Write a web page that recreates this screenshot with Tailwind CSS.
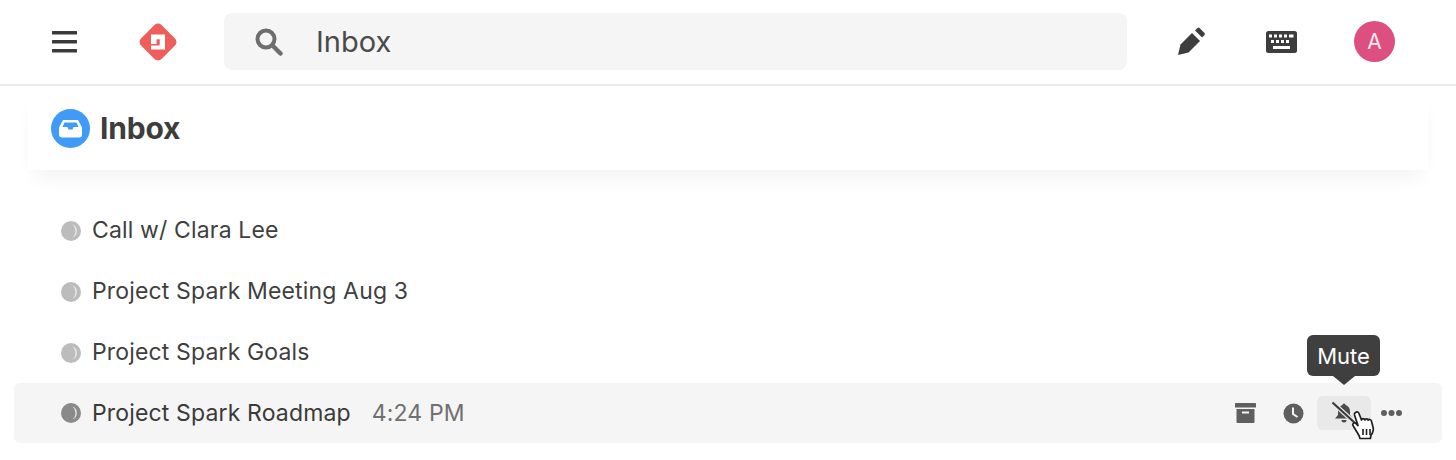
<!DOCTYPE html>
<html>
<head>
<meta charset="utf-8">
<script src="https://cdn.jsdelivr.net/npm/@tailwindcss/browser@4"></script>
</head>
<body class="bg-white overflow-hidden font-['Inter',sans-serif] text-[#3f3f3f]">
<div class="w-[1456px] h-[460px] overflow-hidden flex flex-col">
  <header class="h-[86px] shrink-0 border-b-2 border-[#ebebeb] flex items-center pl-[52px] pb-[1px]">
    <svg class="w-[25px] h-[22px] shrink-0" viewBox="0 0 25 22"><rect x="0" y="0" width="25" height="3.6" rx=".5" fill="#3a3a3a"/><rect x="0" y="9" width="25" height="3.6" rx=".5" fill="#3a3a3a"/><rect x="0" y="18" width="25" height="3.6" rx=".5" fill="#3a3a3a"/></svg>
    <svg class="w-[42px] h-[42px] ml-[60px] shrink-0" viewBox="0 0 42 42">
      <rect x="6.5" y="6.5" width="29" height="29" rx="5" transform="rotate(45 21 21)" fill="#ee5e5a"/>
      <path d="M14 13.5h14v5h-8.500v4.500h-5.500zM28 18.500v10h-14v-4h8.500v-6z" fill="#fff"/>
      <path d="M20 18.500h2.500v5h-2.500z" fill="#ee5e5a"/>
    </svg>
    <div class="w-[903px] h-[57px] ml-[45px] rounded-[8px] bg-[#f5f5f5] flex items-center pl-[30px] shrink-0">
      <svg class="w-[29px] h-[29px] shrink-0" viewBox="0 0 29 29"><circle cx="12" cy="12" r="8.500" fill="none" stroke="#6e6e6e" stroke-width="4"/><path d="M18.500 18.500l8 8" stroke="#6e6e6e" stroke-width="4.500" stroke-linecap="round"/></svg>
      <span class="ml-[33px] text-[29px] leading-none text-[#4a4a4a]">Inbox</span>
    </div>
    <svg class="w-[30px] h-[30px] ml-[49px] shrink-0" viewBox="0 0 30 30">
      <path d="M2 28l2.500-10.500L16 6l8 8-11.500 11.500z" fill="#3d3d3d"/>
      <path d="M19 3.500l2.500-2.500a1.500 1.500 0 0 1 2 0l5 5a1.500 1.500 0 0 1 0 2L26 10.500z" fill="#3d3d3d"/>
      <path d="M15 4l1.500-1.500 9 9" stroke="#fff" stroke-width="1.200" fill="none"/>
    </svg>
    <svg class="w-[31px] h-[22px] ml-[60px] shrink-0" viewBox="0 0 31 22">
      <rect width="31" height="22" rx="2.500" fill="#3d3d3d"/>
      <g fill="#fff"><rect x="3" y="3.500" width="3" height="3"/><rect x="8" y="3.500" width="3" height="3"/><rect x="13" y="3.500" width="3" height="3"/><rect x="18" y="3.500" width="3" height="3"/><rect x="23" y="3.500" width="4.500" height="3"/><rect x="5" y="9" width="3" height="3"/><rect x="10" y="9" width="3" height="3"/><rect x="15" y="9" width="3" height="3"/><rect x="20" y="9" width="3" height="3"/><rect x="7" y="15" width="17" height="3"/></g>
    </svg>
    <div class="w-[41px] h-[41px] ml-[57px] rounded-full bg-[#dd4f7f] text-[#fde8ef] flex items-center justify-center text-[21px] shrink-0">A</div>
  </header>

  <div class="h-[84px] shrink-0 mx-[28px] pl-[23px] flex items-center gap-[10px] bg-white shadow-[0_14px_20px_-8px_rgba(0,0,0,0.06)]">
    <div class="w-[39px] h-[39px] rounded-full bg-[#3f9bf6] flex items-center justify-center shrink-0">
      <svg class="w-[25px] h-[19px]" viewBox="0 0 25 19"><path d="M5 1h15l4 7.500v7a3 3 0 0 1-3 3H4a3 3 0 0 1-3-3v-7z" fill="#fff"/><path d="M6.500 3.500h12l2 4.500h-5l-1 2.500h-4l-1-2.500h-5z" fill="#3f9bf6"/></svg>
    </div>
    <h1 class="text-[30px] leading-none font-bold text-[#3d3d3d] tracking-[-0.2px]">Inbox</h1>
  </div>

  <ul class="mt-[30px] mx-[14px] text-[23px] leading-none">
    <li class="h-[61px] pl-[47px] flex items-center gap-[11px]">
      <svg class="w-[20px] h-[20px] shrink-0" viewBox="0 0 20 20"><circle cx="10" cy="10" r="10" fill="#bcbcbc"/><path d="M11.500 3.500a7 7 0 0 1 0 13a8.500 8.500 0 0 0 0-13z" fill="#e9e9e9"/></svg>
      <span class="tracking-[0.15px]">Call w/ Clara Lee</span>
    </li>
    <li class="h-[61px] pl-[47px] flex items-center gap-[11px]">
      <svg class="w-[20px] h-[20px] shrink-0" viewBox="0 0 20 20"><circle cx="10" cy="10" r="10" fill="#bcbcbc"/><path d="M11.500 3.500a7 7 0 0 1 0 13a8.500 8.500 0 0 0 0-13z" fill="#e9e9e9"/></svg>
      <span class="tracking-[0.15px]">Project Spark Meeting Aug 3</span>
    </li>
    <li class="h-[61px] pl-[47px] flex items-center gap-[11px]">
      <svg class="w-[20px] h-[20px] shrink-0" viewBox="0 0 20 20"><circle cx="10" cy="10" r="10" fill="#bcbcbc"/><path d="M11.500 3.500a7 7 0 0 1 0 13a8.500 8.500 0 0 0 0-13z" fill="#e9e9e9"/></svg>
      <span class="tracking-[0.15px]">Project Spark Goals</span>
    </li>
    <li class="relative h-[60px] pl-[47px] pr-[40px] flex items-center gap-[11px] bg-[#f5f5f5] rounded-[6px]">
      <svg class="w-[20px] h-[20px] shrink-0" viewBox="0 0 20 20"><circle cx="10" cy="10" r="10" fill="#8a8a8a"/><path d="M11.500 3.500a7 7 0 0 1 0 13a8.500 8.500 0 0 0 0-13z" fill="#e2e2e2"/></svg>
      <span class="tracking-[0.15px] text-[#3a3a3a]">Project Spark Roadmap</span>
      <span class="ml-[10px] text-[#707070] tracking-[0.15px]">4:24 PM</span>
      <div class="ml-auto flex items-center">
        <svg class="w-[21px] h-[20px] shrink-0" viewBox="0 0 21 20"><rect x="0" y="0" width="21" height="4.500" rx=".5" fill="#5f5f5f"/><path d="M1.500 6h18v13a1 1 0 0 1-1 1h-16a1 1 0 0 1-1-1z" fill="#5f5f5f"/><rect x="7" y="8.500" width="7" height="2" fill="#f5f5f5"/></svg>
        <svg class="w-[21px] h-[21px] ml-[27px] shrink-0" viewBox="0 0 21 21"><circle cx="10.500" cy="10.500" r="10" fill="#5f5f5f"/><path d="M10 4.500v6.500l4.500 3" fill="none" stroke="#f5f5f5" stroke-width="2"/></svg>
        <div class="w-[54px] h-[34px] ml-[13px] rounded-[6px] bg-[#e9e9e9] flex items-center justify-center">
          <svg class="w-[26px] h-[24px]" viewBox="0 0 26 24"><path d="M13 2.500c1 0 1.500.8 1.500 1.500c3 .8 4.500 3.500 4.500 6.500v3.500l3 3.500H4l3-3.500v-3.500c0-3 1.500-5.700 4.500-6.500c0-.7.500-1.500 1.500-1.500z" fill="#4a4a4a"/><path d="M10.500 19h5a2.500 2.500 0 0 1-5 0z" fill="#4a4a4a"/><path d="M1.500 1.500l23 21" stroke="#e9e9e9" stroke-width="4.500"/><path d="M1.500 1.500l23 21" stroke="#3a3a3a" stroke-width="2.200"/></svg>
        </div>
        <svg class="w-[21px] h-[6px] ml-[10px] shrink-0" viewBox="0 0 21 6"><circle cx="3" cy="3" r="3" fill="#5f5f5f"/><circle cx="10.500" cy="3" r="3" fill="#5f5f5f"/><circle cx="18" cy="3" r="3" fill="#5f5f5f"/></svg>
      </div>

      <div class="absolute left-[1293px] top-[-48px] w-[73px] h-[41px] rounded-[6px] bg-[#3f3f3f] text-white text-[22px] flex items-center justify-center">Mute
        <div class="absolute left-1/2 -translate-x-1/2 bottom-[-9px] w-0 h-0 border-x-[11px] border-x-transparent border-t-[9px] border-t-[#3f3f3f]"></div>
      </div>

      <svg class="absolute left-[1336px] top-[27px] w-[27px] h-[30px]" viewBox="0 0 27 30">
        <path d="M5.500 2.500c1.500-1.200 3-.5 3.500 1l2.500 6.500c.3-1.800 2.800-1.800 3.400 0c.4-1.600 2.800-1.500 3.300.2c.6-1.200 2.800-1 3.200.8l1.600 6c.8 3-.2 6-2 8l-.6 3.500H10l-1-3L3 15.500c-1-1.500 1-3.500 2.500-2.300l2.500 2.300L4.500 5c-.3-1 .2-2 1-2.500z" fill="#fff" stroke="#1f1f1f" stroke-width="1.700" stroke-linejoin="round"/>
        <path d="M13 19v6M16.500 19v6M20 19v6" stroke="#1f1f1f" stroke-width="1.600"/>
      </svg>
    </li>
  </ul>
</div>
</body>
</html>
